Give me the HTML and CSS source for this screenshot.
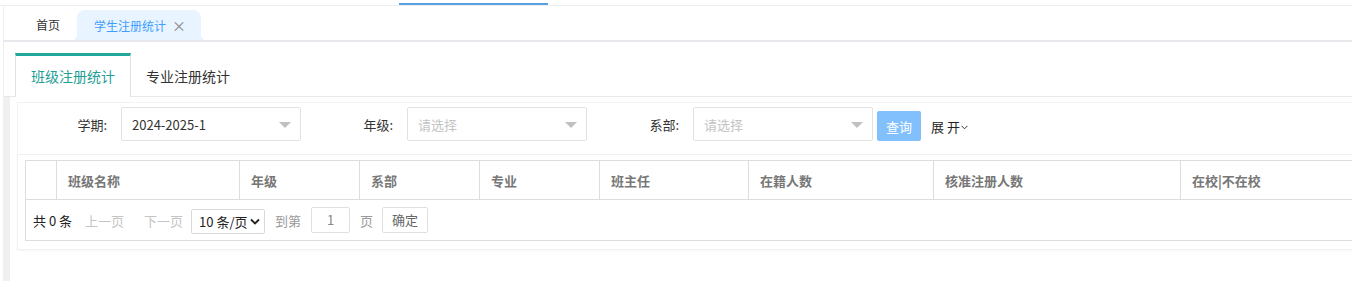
FILE: index.html
```html
<!DOCTYPE html>
<html lang="zh-CN">
<head>
<meta charset="utf-8">
<title>学生注册统计</title>
<link rel="stylesheet" href="styles.css">
</head>
<body>
<div class="topbar"><div class="topbar-indicator"></div></div>
<div class="tabbar">
  <div class="ptab">首页</div>
  <div class="ptab ptab-active">学生注册统计<span class="ptab-close">×</span></div>
</div>
<div class="main">
  <div class="subtabs">
    <div class="subtab subtab-active">班级注册统计</div>
    <div class="subtab">专业注册统计</div>
  </div>
  <div class="body">
    <div class="form-card">
      <div class="field">
        <label class="field-label">学期:</label>
        <div class="sel"><span class="sel-value">2024-2025-1</span><svg class="sel-arrow" width="12" height="6" viewBox="0 0 12 6"><polygon points="0,0 12,0 6,6" fill="#c0c0c0"/></svg></div>
      </div>
      <div class="field">
        <label class="field-label">年级:</label>
        <div class="sel"><span class="sel-placeholder">请选择</span><svg class="sel-arrow" width="12" height="6" viewBox="0 0 12 6"><polygon points="0,0 12,0 6,6" fill="#c0c0c0"/></svg></div>
      </div>
      <div class="field">
        <label class="field-label">系部:</label>
        <div class="sel"><span class="sel-placeholder">请选择</span><svg class="sel-arrow" width="12" height="6" viewBox="0 0 12 6"><polygon points="0,0 12,0 6,6" fill="#c0c0c0"/></svg></div>
      </div>
      <button class="btn-query">查询</button>
      <span class="expand">展 开<svg width="7" height="5" viewBox="0 0 7 5"><polyline points="0.5,0.8 3.5,3.8 6.5,0.8" fill="none" stroke="#333" stroke-width="1"/></svg></span>
    </div>
    <div class="table-card">
      <table class="grid">
        <colgroup>
          <col style="width:31px"><col style="width:183px"><col style="width:120px"><col style="width:120px"><col style="width:120px"><col style="width:149px"><col style="width:185px"><col style="width:247px"><col style="width:247px">
        </colgroup>
        <thead>
          <tr><th></th><th>班级名称</th><th>年级</th><th>系部</th><th>专业</th><th>班主任</th><th>在籍人数</th><th>核准注册人数</th><th>在校|不在校</th></tr>
        </thead>
        <tbody>
          <tr><td colspan="9" class="pager-cell">
            <div class="pager">
              <span class="total">共 0 条</span>
              <span class="pg-link pg-prev">上一页</span>
              <span class="pg-link pg-next">下一页</span>
              <div class="pg-size">10 条/页<svg width="10" height="7" viewBox="0 0 10 7"><polyline points="1,1.5 5,5.5 9,1.5" fill="none" stroke="#222" stroke-width="1.8"/></svg></div>
              <span class="pg-text">到第</span>
              <div class="pg-input">1</div>
              <span class="pg-text">页</span>
              <div class="pg-btn">确定</div>
            </div>
          </td></tr>
        </tbody>
      </table>
    </div>
  </div>
</div>
</body>
</html>
```

FILE: styles.css
```css
* { box-sizing: border-box; }
html, body { margin: 0; padding: 0; background: #fff; }
body {
  width: 1352px;
  height: 281px;
  overflow: hidden;
  font-family: "Noto Sans CJK SC", "Noto Sans", sans-serif;
  font-size: 13px;
  color: #333;
}

.topbar {
  height: 6px;
  padding-top: 3px;
  border-bottom: 1px solid #eeeeee;
  padding-left: 399px;
}
.topbar-indicator {
  width: 149px;
  height: 2px;
  background: #5b9fe3;
}

.tabbar {
  height: 36px;
  margin-left: 3px;
  border-left: 1px solid #f0f0f0;
  border-bottom: 2px solid #e6e8ec;
  display: flex;
  align-items: flex-end;
  padding-left: 20px;
  gap: 5px;
}
.ptab {
  height: 30px;
  line-height: 30px;
  padding: 0 12px;
  font-size: 12px;
  color: #333;
  position: relative;
}
.ptab-active {
  background: #e8f4ff;
  color: #409eff;
  border-radius: 8px 8px 0 0;
  padding: 0 15px 0 17px;
}
.ptab-active::before,
.ptab-active::after {
  content: "";
  position: absolute;
  bottom: 0;
  width: 6px;
  height: 6px;
}
.ptab-active::before {
  left: -6px;
  background: radial-gradient(circle at 0 0, transparent 6px, #e8f4ff 6.5px);
}
.ptab-active::after {
  right: -6px;
  background: radial-gradient(circle at 100% 0, transparent 6px, #e8f4ff 6.5px);
}
.ptab-close {
  color: #888;
  margin-left: 6px;
  font-size: 14px;
}

.main {
  margin-left: 3px;
  border-left: 1px solid #eeeeee;
}
.subtabs {
  height: 55px;
  padding-top: 11px;
  padding-left: 11px;
  border-bottom: 1px solid #e8e8e8;
  display: flex;
  align-items: stretch;
}
.subtab {
  padding: 0 15px;
  font-size: 14px;
  line-height: 40px;
  color: #333;
  border-top: 3px solid transparent;
}
.subtab-active {
  border-top: 3px solid #20a89d;
  border-left: 1px solid #e2e2e2;
  border-right: 1px solid #e2e2e2;
  color: #23a096;
  background: #fff;
  margin-bottom: -1px;
  line-height: 41px;
}

.body {
  margin-left: -1px;
  border-left: 7px solid #f0f0f0;
  padding-left: 7px;
  padding-top: 5px;
  height: 184px;
}

.form-card {
  border: 1px solid #f2f2f2;
  border-right: none;
  height: 53px;
  padding-top: 4px;
  display: flex;
  align-items: flex-start;
}
.field {
  display: flex;
  align-items: center;
  margin-right: 3px;
}
.field-label {
  width: 103px;
  padding-right: 14px;
  text-align: right;
  color: #333;
}
.sel {
  width: 180px;
  height: 34px;
  border: 1px solid #e2e2e2;
  border-radius: 2px;
  display: flex;
  align-items: center;
  justify-content: space-between;
  padding: 0 9px 0 10px;
}
.sel-value { color: #333; }
.sel-placeholder { color: #c4c4c4; }
.sel-arrow { margin-top: 1px; }
.btn-query {
  margin-left: 1px;
  margin-top: 4px;
  width: 44px;
  height: 30px;
  border: none;
  border-radius: 2px;
  background: #82c0fd;
  color: #fff;
  font-family: inherit;
  font-size: 13px;
  padding: 0;
}
.expand {
  margin-left: 10px;
  margin-top: 10px;
  color: #222;
  display: flex;
  align-items: center;
  gap: 1px;
}
.expand svg { margin-top: 2px; }

.table-card {
  margin-top: -1px;
  border: 1px solid #f0f0f0;
  border-right: none;
  box-shadow: 0 1px 2px rgba(0,0,0,0.04);
  height: 96px;
  padding: 5px 0 0 7px;
  overflow: hidden;
}
.grid {
  border-collapse: collapse;
  table-layout: fixed;
  width: 1402px;
}
.grid th {
  height: 39px;
  border: 1px solid #dddddd;
  text-align: left;
  padding: 0 0 0 11px;
  font-weight: 700;
  color: #777;
  font-size: 13px;
}
.pager-cell {
  height: 41px;
  border: 1px solid #dddddd;
  padding: 0 0 0 7px;
}
.pager {
  display: flex;
  align-items: center;
  height: 39px;
}
.total { color: #222; }
.pg-link { color: #c4c4c4; }
.pg-prev { margin-left: 13px; }
.pg-next { margin-left: 20px; }
.pg-size {
  margin-left: 8px;
  width: 74px;
  height: 25px;
  border: 1px solid #d9d9d9;
  border-radius: 2px;
  display: flex;
  align-items: center;
  justify-content: space-between;
  padding: 0 4px 0 7px;
  color: #222;
  margin-top: 2px;
}
.pg-text { color: #999; margin-left: 10px; }
.pg-input {
  margin-left: 10px;
  width: 39px;
  height: 26px;
  border: 1px solid #e0e0e0;
  border-radius: 2px;
  text-align: center;
  line-height: 24px;
  color: #888;
}
.pg-btn {
  margin-left: 9px;
  width: 46px;
  height: 26px;
  border: 1px solid #e0e0e0;
  border-radius: 2px;
  text-align: center;
  line-height: 24px;
  color: #666;
}
```
